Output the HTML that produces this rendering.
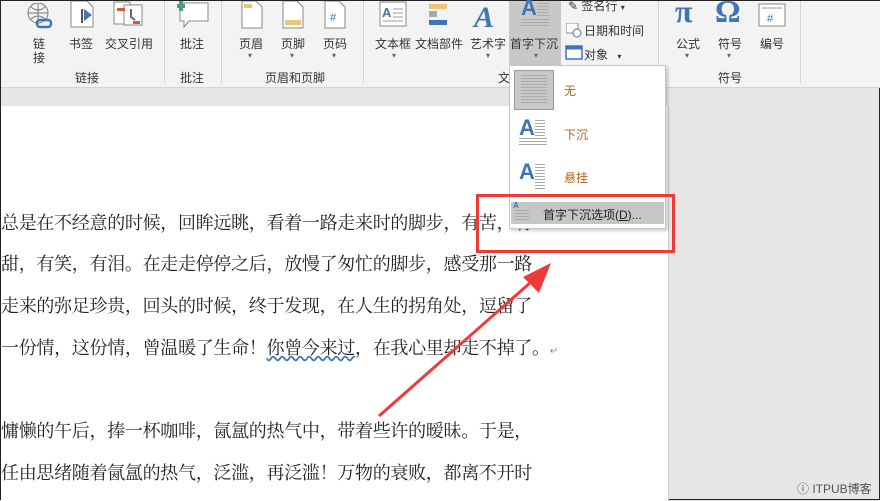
<!DOCTYPE html>
<html><head><meta charset="utf-8"><style>
*{margin:0;padding:0;box-sizing:border-box}
body{width:880px;height:500px;overflow:hidden;position:relative;background:#e6e6e6;font-family:"Liberation Sans","Noto Sans CJK SC",sans-serif;border:1px solid #222}
.rib{position:absolute;left:0;top:0;width:880px;height:87px;background:#f3f3f3;border-bottom:1px solid #d5d5d5}
.t{position:absolute;font-size:12px;color:#333;white-space:nowrap}
.sep{position:absolute;top:0;width:1px;height:82px;background:#d4d4d4}
.dd{position:absolute;font-size:8px;color:#666}
.doc{position:absolute;left:0;top:105px;width:668px;height:395px;background:#fff;border-right:1px solid #ccc}
.ln{position:absolute;left:0;font-size:18px;color:#222;white-space:nowrap;font-family:"Noto Serif CJK SC","Noto Sans CJK SC",serif;letter-spacing:-0.3px}
.menu{position:absolute;left:508px;top:64px;width:157px;height:164px;background:#fff;border:1px solid #c6c6c6;box-shadow:2px 2px 3px rgba(0,0,0,.2)}
.A{position:absolute;color:#3f75b5;font-weight:bold;font-size:22px}
.lines{position:absolute;width:12px;background:repeating-linear-gradient(#aaa 0 1px,transparent 1px 3px)}
</style></head><body>
<div class="rib">
<svg style="position:absolute;left:24px;top:2px" width="30" height="28"><circle cx="13" cy="10" r="10" fill="none" stroke="#777"/><path d="M3 10h20M13 0v20M6 4q7 6 14 0M6 16q7-6 14 0" stroke="#777" fill="none"/><rect x="12" y="17" width="14" height="7" rx="3" fill="none" stroke="#3f75b5" stroke-width="2.5"/></svg>
<div class="t" style="left:32px;top:34px">链</div><div class="t" style="left:32px;top:48px">接</div>
<svg style="position:absolute;left:69px;top:0" width="26" height="28"><path d="M1 0v26h22V6l-6-6z" fill="#fff" stroke="#888"/><path d="M12 8v14" stroke="#555" stroke-width="2"/><path d="M14 8l8 6-8 6z" fill="#3f75b5"/></svg>
<div class="t" style="left:68px;top:34px">书签</div>
<svg style="position:absolute;left:112px;top:0" width="32" height="26"><rect x="1" y="1" width="16" height="22" fill="#fff" stroke="#888"/><rect x="11" y="4" width="18" height="20" fill="#fff" stroke="#888"/><rect x="4" y="7" width="8" height="3" fill="#d9553b"/><rect x="20" y="20" width="7" height="3" fill="#d9553b"/><path d="M18 8v8l4 3" stroke="#666" fill="none" stroke-width="2"/></svg>
<div class="t" style="left:104px;top:34px">交叉引用</div>
<div class="sep" style="left:163px"></div>
<svg style="position:absolute;left:176px;top:0" width="34" height="28"><path d="M3 2h28v18H12l-5 6v-6H3z" fill="#fff" stroke="#888"/><path d="M4 0v10M0 5h8" stroke="#4f9a80" stroke-width="4"/></svg>
<div class="t" style="left:179px;top:34px">批注</div>
<div class="sep" style="left:220px"></div>
<svg style="position:absolute;left:240px;top:0" width="22" height="28"><path d="M1 0v27h20V6l-6-6z" fill="#fff" stroke="#888"/><rect x="3" y="3" width="8" height="4" fill="#edc57a"/></svg>
<div class="t" style="left:238px;top:34px">页眉</div><div class="dd" style="left:247px;top:50px">▾</div>
<svg style="position:absolute;left:281px;top:0" width="22" height="28"><path d="M1 0v27h20V6l-6-6z" fill="#fff" stroke="#888"/><rect x="3" y="19" width="16" height="5" fill="#edc57a"/></svg>
<div class="t" style="left:280px;top:34px">页脚</div><div class="dd" style="left:289px;top:50px">▾</div>
<svg style="position:absolute;left:323px;top:0" width="22" height="28"><path d="M1 0v27h20V6l-6-6z" fill="#fff" stroke="#888"/><text x="6" y="20" font-size="11" fill="#3f75b5" font-family="Liberation Sans">#</text></svg>
<div class="t" style="left:322px;top:34px">页码</div><div class="dd" style="left:331px;top:50px">▾</div>
<div class="t" style="left:264px;top:68px">页眉和页脚</div>
<div class="t" style="left:74px;top:68px">链接</div>
<div class="t" style="left:179px;top:68px">批注</div>
<div class="sep" style="left:362px"></div>
<svg style="position:absolute;left:378px;top:0" width="28" height="26"><rect x="1" y="1" width="26" height="24" fill="#fff" stroke="#888"/><text x="3" y="16" font-size="13" fill="#3f75b5" font-weight="bold" font-family="Liberation Sans">A</text><path d="M14 8h10M14 12h10M14 16h10M4 20h20" stroke="#999"/></svg>
<div class="t" style="left:374px;top:34px">文本框</div><div class="dd" style="left:391px;top:50px">▾</div>
<svg style="position:absolute;left:427px;top:0" width="20" height="26"><rect x="1" y="3" width="18" height="5" fill="#edc57a"/><rect x="1" y="10" width="8" height="6" fill="#aaa"/><rect x="1" y="19" width="18" height="5" fill="#3f75b5"/></svg>
<div class="t" style="left:414px;top:34px">文档部件</div>
<div class="t" style="left:473px;top:0;font-size:30px;color:#3f75b5;font-style:italic;font-family:'Liberation Serif',serif;font-weight:bold">A</div>
<div class="t" style="left:469px;top:34px">艺术字</div><div class="dd" style="left:485px;top:50px">▾</div>
<div style="position:absolute;left:508px;top:0;width:52px;height:64px;background:#c8c8c8"></div>
<div class="A" style="left:520px;top:-6px">A</div><div class="lines" style="left:536px;top:2px;height:14px"></div><div class="lines" style="left:520px;top:18px;width:28px;height:8px"></div>
<div class="t" style="left:509px;top:34px">首字下沉</div><div class="dd" style="left:533px;top:50px">▾</div>
<div class="t" style="left:567px;top:-4px">✎ 签名行 <span style="font-size:8px">▾</span></div>
<svg style="position:absolute;left:565px;top:22px" width="16" height="15"><rect x="0" y="0" width="12" height="10" fill="#fff" stroke="#888"/><circle cx="11" cy="10" r="4" fill="#fff" stroke="#3f75b5"/></svg>
<div class="t" style="left:583px;top:21px">日期和时间</div>
<svg style="position:absolute;left:564px;top:44px" width="18" height="15"><rect x="1" y="1" width="16" height="13" fill="#fff" stroke="#3f75b5" stroke-width="1.5"/><path d="M1 3h16" stroke="#3f75b5" stroke-width="3"/></svg>
<div class="t" style="left:583px;top:45px">对象 <span style="font-size:8px;margin-left:6px">▾</span></div>
<div class="t" style="left:497px;top:68px">文</div>
<div class="sep" style="left:657px"></div>
<div class="t" style="left:674px;top:-8px;font-size:32px;color:#3f75b5;font-family:'Liberation Serif',serif;font-weight:bold">π</div>
<div class="t" style="left:675px;top:34px">公式</div><div class="dd" style="left:684px;top:50px">▾</div>
<div class="t" style="left:714px;top:-8px;font-size:32px;color:#3f75b5;font-family:'Liberation Serif',serif;font-weight:bold">Ω</div>
<div class="t" style="left:717px;top:34px">符号</div><div class="dd" style="left:726px;top:50px">▾</div>
<svg style="position:absolute;left:757px;top:2px" width="28" height="24"><rect x="1" y="1" width="26" height="22" fill="#fff" stroke="#888"/><path d="M4 5h20" stroke="#999"/><text x="9" y="19" font-size="11" fill="#3f75b5" font-family="Liberation Sans">#</text></svg>
<div class="t" style="left:759px;top:34px">编号</div>
<div class="t" style="left:717px;top:68px">符号</div>
<div class="sep" style="left:799px"></div>
</div>
<div class="doc">
<div class="ln" style="top:103px">总是在不经意的时候，回眸远眺，看着一路走来时的脚步，有苦，有</div>
<div class="ln" style="top:144px">甜，有笑，有泪。在走走停停之后，放慢了匆忙的脚步，感受那一路</div>
<div class="ln" style="top:186px">走来的弥足珍贵，回头的时候，终于发现，在人生的拐角处，逗留了</div>
<div class="ln" style="top:228px">一份情，这份情，曾温暖了生命！<span style="text-decoration:underline wavy #3f75b5">你曾今来过</span>，在我心里却走不掉了。<span style="font-size:10px;color:#888">↵</span></div>
<div class="ln" style="top:311px">慵懒的午后，捧一杯咖啡，氤氲的热气中，带着些许的暧昧。于是，</div>
<div class="ln" style="top:353px">任由思绪随着氤氲的热气，泛滥，再泛滥！万物的衰败，都离不开时</div>
</div>
<div class="menu">
<div style="position:absolute;left:4px;top:4px;width:40px;height:40px;background:#c8c8c8;border:1px solid #999"><div class="lines" style="left:6px;top:4px;width:26px;height:30px"></div></div>
<div class="t" style="left:54px;top:16px;color:#b5651d">无</div>
<div class="A" style="left:9px;top:49px">A</div><div class="lines" style="left:25px;top:54px;height:16px;width:10px"></div><div class="lines" style="left:9px;top:72px;width:28px;height:8px"></div>
<div class="t" style="left:54px;top:60px;color:#b5651d">下沉</div>
<div class="A" style="left:9px;top:93px">A</div><div class="lines" style="left:25px;top:98px;height:26px;width:10px"></div>
<div class="t" style="left:54px;top:103px;color:#b5651d">悬挂</div>
<div style="position:absolute;left:1px;top:136px;width:153px;height:22px;background:#c6c6c6"><div class="t" style="left:2px;top:-1px;font-size:8px;color:#3f75b5;font-weight:bold">A</div><div class="lines" style="left:4px;top:8px;width:14px;height:10px"></div><div class="t" style="left:32px;top:4px;color:#222">首字下沉选项(<u>D</u>)...</div></div>
</div>
<div style="position:absolute;left:475px;top:193px;width:199px;height:59px;border:3px solid #f03a3a"></div>
<svg style="position:absolute;left:0;top:0" width="880" height="500"><path d="M378 415L538 274" stroke="#f03a3a" stroke-width="3"/><path d="M550 262L522 276L538 292z" fill="#f03a3a"/></svg>
<div class="t" style="left:796px;top:479px;color:#555;font-size:12px">ⓘ ITPUB博客</div>
</body></html>
